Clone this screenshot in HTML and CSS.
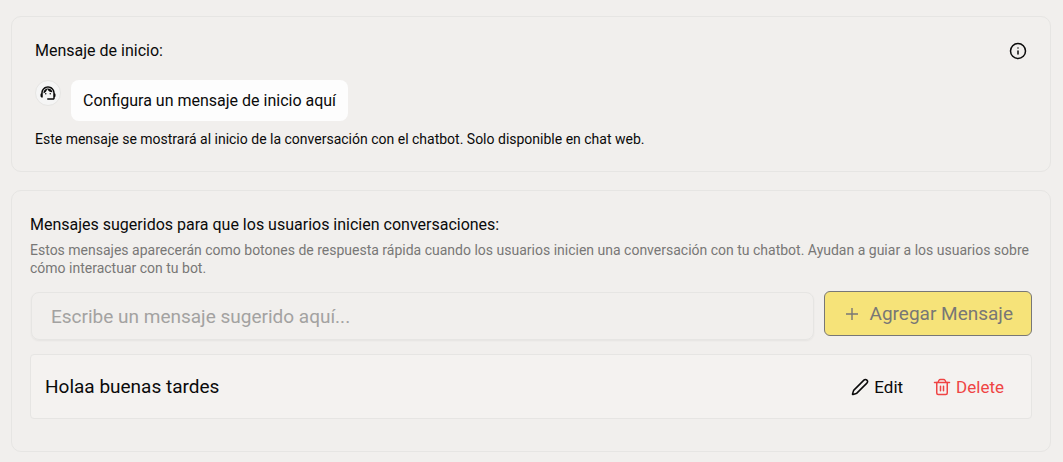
FILE: index.html
```html
<!DOCTYPE html>
<html lang="es">
<head>
    <meta charset="UTF-8">
    <meta name="viewport" content="width=device-width, initial-scale=1.0">
    <title>Mensajes del chatbot</title>
    <link rel="stylesheet" href="styles.css">
</head>
<body>
    <main class="settings">
        <!-- Welcome message -->
        <section class="card welcome">
            <header class="card-header">
                <h2 class="card-title">Mensaje de inicio:</h2>
                <button type="button" class="icon-button" aria-label="Información">
                    <svg width="18" height="18" viewBox="0 0 24 24" fill="none" stroke="currentColor" stroke-width="2" stroke-linecap="round" stroke-linejoin="round">
                        <circle cx="12" cy="12" r="10"/>
                        <path d="M12 16v-4"/>
                        <path d="M12 8h.01"/>
                    </svg>
                </button>
            </header>
            <div class="chat-row">
                <div class="avatar">
                    <svg width="18" height="18" viewBox="0 0 24 24" fill="currentColor">
                        <path d="M21 12.22C21 6.73 16.74 3 12 3c-4.69 0-9 3.65-9 9.28-.6.34-1 .98-1 1.72v2c0 1.1.9 2 2 2h1v-6.1c0-3.87 3.13-7 7-7s7 3.13 7 7V19h-8v2h8c1.1 0 2-.9 2-2v-1.22c.59-.31 1-.92 1-1.64v-2.3c0-.7-.41-1.31-1-1.62z"/>
                        <circle cx="9" cy="13" r="1"/>
                        <circle cx="15" cy="13" r="1"/>
                        <path d="M18 11.03C17.52 8.18 15.04 6 12.05 6c-3.03 0-6.29 2.51-6.03 6.45 2.47-1.01 4.33-3.21 4.86-5.89 1.31 2.63 4 4.44 7.12 4.47z"/>
                    </svg>
                </div>
                <div class="bubble">Configura un mensaje de inicio aquí</div>
            </div>
            <p class="note">Este mensaje se mostrará al inicio de la conversación con el chatbot. Solo disponible en chat web.</p>
        </section>

        <!-- Suggested messages -->
        <section class="card suggested">
            <h2 class="card-title"><label for="suggestion">Mensajes sugeridos para que los usuarios inicien conversaciones:</label></h2>
            <p class="description">Estos mensajes aparecerán como botones de respuesta rápida cuando los usuarios inicien una conversación con tu chatbot. Ayudan a guiar a los usuarios sobre cómo interactuar con tu bot.</p>
            <form class="add-form">
                <input type="text" id="suggestion" class="text-input" placeholder="Escribe un mensaje sugerido aquí...">
                <button type="submit" class="add-button" disabled>
                    <svg width="16" height="16" viewBox="0 0 16 16" fill="none" stroke="currentColor" stroke-width="1.4">
                        <path d="M2 8h12M8 2v12"/>
                    </svg>
                    Agregar Mensaje
                </button>
            </form>
            <ul class="message-list">
                <li class="message-item">
                    <span class="message-text">Holaa buenas tardes</span>
                    <button type="button" class="action">
                        <svg width="18" height="18" viewBox="0 0 24 24" fill="none" stroke="currentColor" stroke-width="2" stroke-linecap="round" stroke-linejoin="round">
                            <path d="M21.174 6.812a1 1 0 0 0-3.986-3.987L3.842 16.174a2 2 0 0 0-.5.83l-1.321 4.352a.5.5 0 0 0 .623.622l4.353-1.32a2 2 0 0 0 .83-.497z"/>
                        </svg>
                        Edit
                    </button>
                    <button type="button" class="action delete">
                        <svg width="18" height="18" viewBox="0 0 24 24" fill="none" stroke="currentColor" stroke-width="2" stroke-linecap="round" stroke-linejoin="round">
                            <path d="M2 6h20"/>
                            <path d="M5 6v14c0 1 1 2 2 2h10c1 0 2-1 2-2V6"/>
                            <path d="M7 5l1-2c.4-.7 1-1 2-1h4c1 0 1.600.3 2 1l1 2"/>
                            <path d="M10 11v6M14 11v6"/>
                        </svg>
                        Delete
                    </button>
                </li>
            </ul>
        </section>
    </main>
</body>
</html>
```
FILE: styles.css
```css
:root {
    --background: #f1efed;
    --foreground: #0a0a0a;
    --surface: #f4f2f0;
    --border: #e6e5e3;
    --muted: #787776;
    --placeholder: #a3a2a1;
    --primary: #f6e379;
    --destructive: #ef4444;
}

* {
    box-sizing: border-box;
}

body {
    margin: 0;
    background-color: var(--background);
    color: var(--foreground);
    font-family: Roboto, "Liberation Sans", sans-serif;
    font-size: 16px;
    line-height: 24px;
}

button,
input {
    font: inherit;
    color: inherit;
}

h2,
p,
ul {
    margin: 0;
    padding: 0;
}

.settings {
    display: flex;
    flex-direction: column;
    gap: 18px;
    padding: 16px 12px 10px 11px;
}

.card {
    border: 1px solid var(--border);
    border-radius: 10px;
}

.card-title {
    font-size: 16px;
    font-weight: 400;
    line-height: 24px;
}

/* Welcome message */
.welcome {
    padding: 22px 23px;
}

.card-header {
    display: flex;
    align-items: center;
    justify-content: space-between;
}

.icon-button {
    display: flex;
    padding: 0;
    border: none;
    background: none;
    cursor: pointer;
}

.chat-row {
    display: flex;
    align-items: flex-start;
    gap: 10px;
    margin-top: 17px;
}

.avatar {
    display: flex;
    align-items: center;
    justify-content: center;
    width: 26px;
    height: 26px;
    border: 1px solid var(--border);
    border-radius: 50%;
    background-color: #f5f5f5;
}

.bubble {
    padding: 9px 12px 8px;
    border-radius: 8px;
    background-color: #fdfdfd;
    line-height: 24px;
}

.note {
    margin-top: 8px;
    font-size: 14px;
    line-height: 20px;
}

/* Suggested messages */
.suggested {
    padding: 22px 18px 32px;
}

.description {
    margin-top: 4px;
    color: var(--muted);
    font-size: 14px;
    line-height: 18px;
}

.add-form {
    display: flex;
    gap: 10px;
    margin-top: 14px;
}

.text-input {
    flex: 1;
    min-width: 0;
    height: 48px;
    margin: 1px 0 0 1px;
    padding: 0 19px;
    border: 1px solid var(--border);
    border-radius: 8px;
    background: none;
    box-shadow: 0 1px 2px rgba(0, 0, 0, 0.05);
    font-size: 19px;
}

.text-input::placeholder {
    color: var(--placeholder);
    opacity: 1;
}

.add-button {
    display: flex;
    align-items: center;
    gap: 10px;
    height: 45px;
    padding: 0 18px 0 19px;
    border: 1px solid var(--muted);
    border-radius: 6px;
    background-color: var(--primary);
    color: var(--muted);
    font-size: 19px;
}

.message-list {
    margin-top: 14px;
    list-style: none;
}

.message-item {
    display: flex;
    align-items: center;
    gap: 30px;
    padding: 20px 27px 19px 14px;
    border: 1px solid var(--border);
    border-radius: 4px;
    background-color: var(--surface);
}

.message-text {
    flex: 1;
    font-size: 19px;
}

.action {
    display: flex;
    align-items: center;
    gap: 5px;
    padding: 0;
    border: none;
    background: none;
    font-size: 17px;
    cursor: pointer;
}

.delete {
    color: var(--destructive);
}
```
